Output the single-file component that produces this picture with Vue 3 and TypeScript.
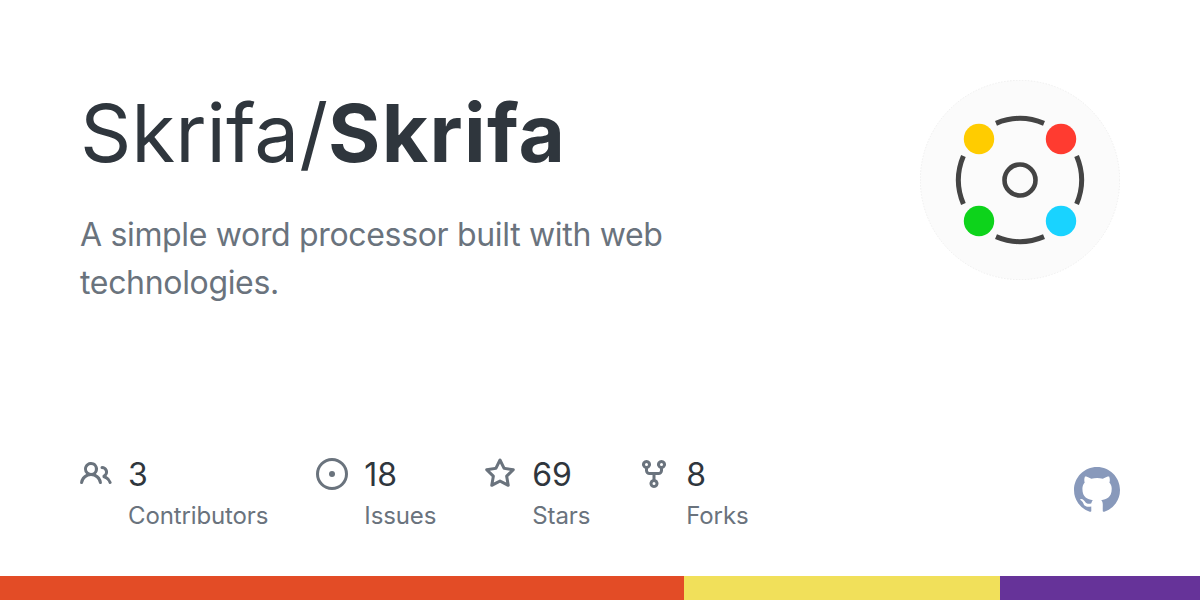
<script setup lang="ts">
interface Stat {
  value: string
  label: string
  paths: string[]
}

const stats: Stat[] = [
  {
    value: '3',
    label: 'Contributors',
    paths: [
      'M2 5.5a3.5 3.5 0 1 1 5.898 2.549 5.508 5.508 0 0 1 3.034 4.084.75.75 0 1 1-1.482.235 4 4 0 0 0-7.9 0 .75.75 0 0 1-1.482-.236A5.507 5.507 0 0 1 3.102 8.05 3.493 3.493 0 0 1 2 5.5ZM11 4a3.001 3.001 0 0 1 2.22 5.018 5.01 5.01 0 0 1 2.56 3.012.749.749 0 0 1-.885.954.752.752 0 0 1-.549-.514 3.507 3.507 0 0 0-2.522-2.372.75.75 0 0 1-.574-.73v-.352a.75.75 0 0 1 .416-.672A1.5 1.5 0 0 0 11 5.5.75.75 0 0 1 11 4Zm-5.5-.5a2 2 0 1 0-.001 3.999A2 2 0 0 0 5.5 3.5Z',
    ],
  },
  {
    value: '18',
    label: 'Issues',
    paths: [
      'M8 9.5a1.5 1.5 0 1 0 0-3 1.5 1.5 0 0 0 0 3Z',
      'M8 0a8 8 0 1 1 0 16A8 8 0 0 1 8 0ZM1.5 8a6.5 6.5 0 1 0 13 0 6.5 6.5 0 0 0-13 0Z',
    ],
  },
  {
    value: '69',
    label: 'Stars',
    paths: [
      'M8 .25a.75.75 0 0 1 .673.418l1.882 3.815 4.21.612a.75.75 0 0 1 .416 1.279l-3.046 2.97.719 4.192a.751.751 0 0 1-1.088.791L8 12.347l-3.766 1.98a.75.75 0 0 1-1.088-.79l.72-4.194L.818 6.374a.75.75 0 0 1 .416-1.28l4.21-.611L7.327.668A.75.75 0 0 1 8 .25Zm0 2.445L6.615 5.5a.75.75 0 0 1-.564.41l-3.097.45 2.24 2.184a.75.75 0 0 1 .216.664l-.528 3.084 2.769-1.456a.75.75 0 0 1 .698 0l2.77 1.456-.53-3.084a.75.75 0 0 1 .216-.664l2.24-2.183-3.096-.45a.75.75 0 0 1-.564-.41L8 2.694Z',
    ],
  },
  {
    value: '8',
    label: 'Forks',
    paths: [
      'M5 5.372v.878c0 .414.336.75.75.75h4.5a.75.75 0 0 0 .75-.75v-.878a2.25 2.25 0 1 1 1.5 0v.878a2.25 2.25 0 0 1-2.25 2.25h-1.5v2.128a2.251 2.251 0 1 1-1.5 0V8.5h-1.5A2.25 2.25 0 0 1 3.5 6.25v-.878a2.25 2.25 0 1 1 1.5 0ZM5 3.25a.75.75 0 1 0-1.5 0 .75.75 0 0 0 1.5 0Zm6.75.75a.75.75 0 1 0 0-1.5.75.75 0 0 0 0 1.5Zm-3 8.75a.75.75 0 1 0-1.5 0 .75.75 0 0 0 1.5 0Z',
    ],
  },
]

const mark =
  'M8 0c4.42 0 8 3.58 8 8a8.013 8.013 0 0 1-5.45 7.59c-.4.08-.55-.17-.55-.38 0-.27.01-1.13.01-2.2 0-.75-.25-1.23-.54-1.48 1.78-.2 3.65-.88 3.65-3.95 0-.88-.31-1.59-.82-2.15.08-.2.36-1.02-.08-2.12 0 0-.67-.22-2.2.82-.64-.18-1.32-.27-2-.27-.68 0-1.36.09-2 .27-1.53-1.03-2.2-.82-2.2-.82-.44 1.1-.16 1.92-.08 2.12-.51.56-.82 1.28-.82 2.15 0 3.06 1.86 3.75 3.64 3.95-.23.2-.44.55-.51 1.07-.46.21-1.61.55-2.33-.66-.15-.24-.6-.83-1.23-.82-.67.01-.27.38.01.53.34.19.73.9.82 1.13.16.45.68 1.31 2.69.94 0 .67.01 1.3.01 1.49 0 .21-.15.45-.55.37A7.995 7.995 0 0 1 0 8c0-4.42 3.58-8 8-8Z'
</script>

<template>
  <div class="card">
    <div class="main">
      <header class="top">
        <div class="heading">
          <h1 class="title">Skrifa/<strong>Skrifa</strong></h1>
          <p class="desc">A simple word processor built with web technologies.</p>
        </div>
        <svg class="logo" viewBox="0 0 200 200" width="200" height="200" aria-label="Skrifa logo">
          <circle cx="100" cy="100" r="99.7" fill="#fbfbfb" stroke="#e6e6e6" stroke-width="0.6" stroke-dasharray="1.5 1.5" />
          <g fill="none" stroke="#444444">
            <circle cx="100" cy="100" r="15.5" stroke-width="4.6" />
            <g stroke-width="5">
              <path d="M76 43.4 A61.5 61.5 0 0 1 124 43.4" />
              <path d="M76 156.6 A61.5 61.5 0 0 0 124 156.6" />
              <path d="M43.4 76 A61.5 61.5 0 0 0 43.4 124" />
              <path d="M156.6 76 A61.5 61.5 0 0 1 156.6 124" />
            </g>
          </g>
          <circle cx="59" cy="59" r="15.2" fill="#ffcc00" />
          <circle cx="141" cy="59" r="15.2" fill="#ff3b30" />
          <circle cx="59" cy="141" r="15.2" fill="#0dd31b" />
          <circle cx="141" cy="141" r="15.2" fill="#19d3ff" />
        </svg>
      </header>
      <footer class="bottom">
        <ul class="stats">
          <li v-for="stat in stats" :key="stat.label" class="stat">
            <svg class="icon" viewBox="0 0 16 16" width="32" height="32" aria-hidden="true">
              <path v-for="d in stat.paths" :key="d" :d="d" fill-rule="evenodd" />
            </svg>
            <div class="stat-text">
              <span class="value">{{ stat.value }}</span>
              <span class="label">{{ stat.label }}</span>
            </div>
          </li>
        </ul>
        <svg class="mark" viewBox="0 0 16 16" width="46" height="46" aria-label="GitHub">
          <path :d="mark" fill-rule="evenodd" />
        </svg>
      </footer>
    </div>
    <div class="langs">
      <span class="lang html"></span>
      <span class="lang js"></span>
      <span class="lang css"></span>
    </div>
  </div>
</template>

<style scoped>
.card {
  width: 1200px;
  height: 600px;
  display: flex;
  flex-direction: column;
  background: #ffffff;
  font-family: Inter, "Liberation Sans", sans-serif;
  overflow: hidden;
}
.main {
  flex: 1;
  display: flex;
  flex-direction: column;
  justify-content: space-between;
  padding: 80px 80px 38px;
  min-height: 0;
}
.top {
  display: flex;
  justify-content: space-between;
  align-items: flex-start;
}
.heading {
  width: 640px;
  padding-top: 13px;
}
.title {
  margin: 0;
  font-size: 80px;
  line-height: 1;
  font-weight: 400;
  color: #2f363d;
  white-space: nowrap;
}
.title strong {
  font-weight: 700;
  letter-spacing: 1.3px;
}
.desc {
  margin: 38px 0 0;
  font-size: 32px;
  line-height: 48px;
  letter-spacing: -0.33px;
  color: #6a737d;
}
.logo {
  flex: none;
}
.bottom {
  display: flex;
  justify-content: space-between;
  align-items: flex-start;
}
.stats {
  display: flex;
  gap: 48px;
  margin: 0;
  padding: 0;
  list-style: none;
}
.stat {
  display: flex;
  gap: 16px;
  align-items: flex-start;
}
.icon {
  flex: none;
  fill: #6a737d;
  margin-top: 2px;
}
.stat-text {
  display: flex;
  flex-direction: column;
}
.value {
  font-size: 32px;
  line-height: 38px;
  color: #2f363d;
}
.label {
  font-size: 24px;
  line-height: 44px;
  letter-spacing: -0.12px;
  color: #6a737d;
}
.mark {
  flex: none;
  fill: #8899bb;
  margin-top: 11px;
}
.langs {
  display: flex;
  flex: none;
  height: 24px;
}
.lang {
  display: block;
}
.html {
  width: 684px;
  background: #e34c26;
}
.js {
  width: 316px;
  background: #f1e05a;
}
.css {
  width: 200px;
  background: #663399;
}
</style>
